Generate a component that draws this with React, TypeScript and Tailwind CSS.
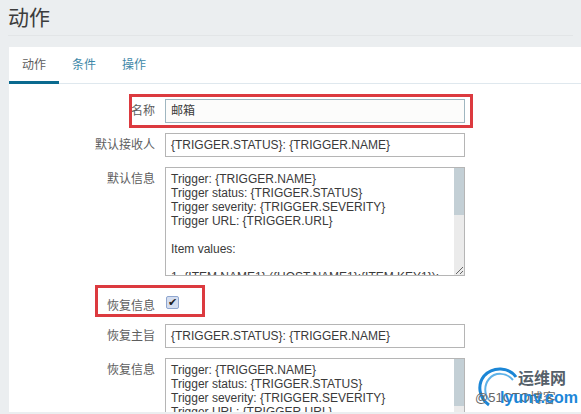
import React from 'react';

const font = "font-['Liberation_Sans','Noto_Sans_CJK_SC',sans-serif]";

const Row = ({ label, children, className = '' }: { label: string; children: React.ReactNode; className?: string }) => (
  <div className={`flex items-start ${className}`}>
    <div className="w-[156px] shrink-0 pr-[10px] pt-[4px] text-right text-[12px] leading-[16px] text-[#5d5d5d]">{label}</div>
    {children}
  </div>
);

const Field = ({ value, active }: { value: string; active?: boolean }) => (
  <div className={`h-[24px] w-[300px] border px-[5px] text-[12px] leading-[22px] text-[#3a3a3a] ${active ? 'border-[#9fb6c0] bg-[#fcfcfb]' : 'border-[#b5b5b5] bg-white'}`}>
    {value}
  </div>
);

const TextArea = ({ lines }: { lines: string[] }) => (
  <div className="relative flex h-[109px] w-[300px] shrink-0 border border-[#b5b5b5]">
    <div className="flex-1 overflow-hidden px-[5px] pt-[4px] text-[12px] leading-[14px] text-[#3a3a3a]">
      {lines.map((line, i) => <div key={i} className="h-[14px] whitespace-nowrap">{line}</div>)}
    </div>
    <div className="w-[10px] shrink-0 bg-[#ebebeb]">
      <div className="h-[47px] bg-[#c3cfd5]" />
    </div>
    <svg className="absolute bottom-0 right-0" width="10" height="10" viewBox="0 0 10 10">
      <path d="M9 2L2 9M9 6L6 9" stroke="#666" strokeWidth="1" />
    </svg>
  </div>
);

const body = [
  'Trigger: {TRIGGER.NAME}',
  'Trigger status: {TRIGGER.STATUS}',
  'Trigger severity: {TRIGGER.SEVERITY}',
  'Trigger URL: {TRIGGER.URL}',
  '',
  'Item values:',
  '',
  '1. {ITEM.NAME1} ({HOST.NAME1}:{ITEM.KEY1}):',
];

const App = () => {
  return (
    <div className={`h-[414px] w-[581px] overflow-hidden bg-[#ebeef0] ${font}`}>
      <h1 className="mx-[8px] h-[36px] border-b border-[#e2e5e7] text-[21px] font-normal leading-[36px] text-[#3c3c3c]">动作</h1>
      <div className="relative ml-[9px] mt-[11px] h-[365px] overflow-hidden bg-white">
        <div className="flex h-[37px] border-b border-[#dfe8ee] text-[12px] leading-[36px]">
          <div className="h-[37px] w-[50px] border-b-[3px] border-[#0a6a8f] text-center text-[#5d5d5d]">动作</div>
          <div className="w-[50px] text-center text-[#3d88a8]">条件</div>
          <div className="w-[50px] text-center text-[#3d88a8]">操作</div>
        </div>
        <div className="flex flex-col pt-[15px]">
          <Row label="名称">
            <Field value="邮箱" active />
          </Row>
          <Row label="默认接收人" className="mt-[10px]">
            <Field value="{TRIGGER.STATUS}: {TRIGGER.NAME}" />
          </Row>
          <Row label="默认信息" className="mt-[10px]">
            <TextArea lines={body} />
          </Row>
          <Row label="恢复信息" className="mt-[18px] h-[20px]">
            <div className="ml-[1px] mt-[2px] flex h-[13px] w-[13px] items-center justify-center rounded-[2px] border border-[#8fa6cf] bg-[#d5def0] text-[11px] leading-none text-[#222]">✔</div>
          </Row>
          <Row label="恢复主旨" className="mt-[10px]">
            <Field value="{TRIGGER.STATUS}: {TRIGGER.NAME}" />
          </Row>
          <Row label="恢复信息" className="mt-[10px]">
            <TextArea lines={body} />
          </Row>
        </div>

        {/* red annotation boxes */}
        <div className="absolute left-[120px] top-[47px] h-[34px] w-[344px] border-[3px] border-[#dc3a3f]" />
        <div className="absolute left-[86px] top-[238px] h-[32px] w-[110px] border-[3px] border-[#dc3a3f]" />

        {/* watermark */}
        <div className="absolute left-[466px] top-[318px] h-[47px] w-[106px] bg-white/80">
          <svg className="absolute left-[3px] top-[2px]" width="42" height="40" viewBox="0 0 42 40" fill="none">
            <path d="M38 10C31 0 15 -1 6 9C-1 18 1 31 11 38" stroke="#1b86d6" strokeWidth="3" />
            <path d="M35 13C28 5 17 5 11 12C6 18 6 27 11 33" stroke="#5fb2e8" strokeWidth="2" />
          </svg>
          <span className="absolute left-[43px] top-[6px] text-[16px] font-bold leading-[16px] text-[#55606a]">运维网</span>
          <span className="absolute left-[0px] top-[26px] whitespace-nowrap text-[13px] leading-[14px] text-[#666]">@51CTO博客</span>
          <span className="absolute left-[25px] top-[25px] text-[16px] font-bold leading-[16px] text-[#1c86d8]">lyunv.com</span>
        </div>
      </div>
    </div>
  );
};

export default App;
